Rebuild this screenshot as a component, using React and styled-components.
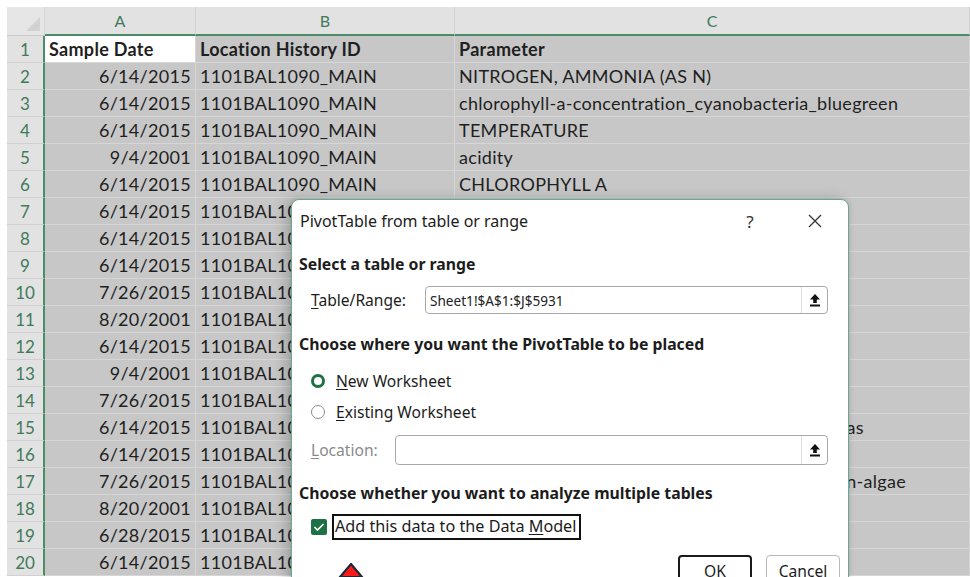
import React from "react";
import styled, { createGlobalStyle } from "styled-components";

const GlobalStyle = createGlobalStyle`
  html, body {
    margin: 0;
    padding: 0;
    background: #fff;
    overflow: hidden;
  }
  #root {
    width: 970px;
    height: 577px;
    position: relative;
    overflow: hidden;
  }
`;

const rows = [
  ["6/14/2015", "1101BAL1090_MAIN", "NITROGEN, AMMONIA (AS N)"],
  ["6/14/2015", "1101BAL1090_MAIN", "chlorophyll-a-concentration_cyanobacteria_bluegreen"],
  ["6/14/2015", "1101BAL1090_MAIN", "TEMPERATURE"],
  ["9/4/2001", "1101BAL1090_MAIN", "acidity"],
  ["6/14/2015", "1101BAL1090_MAIN", "CHLOROPHYLL A"],
  ["6/14/2015", "1101BAL1090_MAIN", ""],
  ["6/14/2015", "1101BAL1090_MAIN", ""],
  ["6/14/2015", "1101BAL1090_MAIN", ""],
  ["7/26/2015", "1101BAL1090_MAIN", ""],
  ["8/20/2001", "1101BAL1090_MAIN", ""],
  ["6/14/2015", "1101BAL1090_MAIN", ""],
  ["9/4/2001", "1101BAL1090_MAIN", ""],
  ["7/26/2015", "1101BAL1090_MAIN", ""],
  ["6/14/2015", "1101BAL1090_MAIN", "phycocyanin-concentration_cyanobacteria_bio_as"],
  ["6/14/2015", "1101BAL1090_MAIN", ""],
  ["7/26/2015", "1101BAL1090_MAIN", "chlorophyll-a-concentration_cryptophytes_green-algae"],
  ["8/20/2001", "1101BAL1090_MAIN", ""],
  ["6/28/2015", "1101BAL1090_MAIN", ""],
  ["6/14/2015", "1101BAL1090_MAIN", ""],
];

const Sheet = styled.div`
  position: absolute;
  left: 7px;
  top: 7px;
  right: 0;
  display: grid;
  grid-template-columns: 38px 151px 259px 1fr;
  grid-auto-rows: 27px;
  grid-template-rows: 29px;
  font-family: Lato, "Liberation Sans", sans-serif;
  font-size: 18px;
  letter-spacing: 0.3px;
  color: #1f1f1f;
`;

const Corner = styled.div`
  background: #e6e6e6;
  border-right: 1px solid #d4d4d4;
  border-bottom: 1px solid #c9c9c9;
  position: relative;
  &::after {
    content: "";
    position: absolute;
    right: 4px;
    bottom: 4px;
    border-left: 14px solid transparent;
    border-bottom: 14px solid #d2d2d2;
  }
`;

const ColHead = styled.div`
  background: #e2e2e2;
  border-right: 1px solid #d0d0d0;
  border-bottom: 2px solid #4a8c66;
  color: #3f7a5a;
  display: flex;
  align-items: center;
  justify-content: center;
  font-size: 16px;
  letter-spacing: 0;
`;

const RowHead = styled.div`
  background: #e2e2e2;
  border-right: 2px solid #4a8c66;
  border-bottom: 1px solid #d0d0d0;
  color: #3f7a5a;
  display: flex;
  align-items: center;
  justify-content: center;
  font-size: 17px;
  letter-spacing: 0;
`;

const Cell = styled.div`
  background: ${(p) => (p.$active ? "#ffffff" : "#c7c7c7")};
  border-right: 1px solid #d6d6d6;
  border-bottom: 1px solid #d6d6d6;
  display: flex;
  align-items: center;
  justify-content: ${(p) => (p.$right ? "flex-end" : "flex-start")};
  padding: 0 4px;
  font-weight: ${(p) => (p.$bold ? 700 : 400)};
  white-space: nowrap;
  overflow: hidden;
`;

const Dialog = styled.div`
  position: absolute;
  left: 291px;
  top: 199px;
  width: 558px;
  height: 420px;
  box-sizing: border-box;
  background: #fff;
  border: 1px solid #6aa88f;
  border-radius: 8px;
  box-shadow: -6px 0 14px rgba(0, 0, 0, 0.18), 0 0 4px rgba(0, 0, 0, 0.12);
  font-family: "Noto Sans", "Open Sans", sans-serif;
  color: #1c1c1c;
  display: flex;
  flex-direction: column;
`;

const TitleBar = styled.div`
  height: 42px;
  display: flex;
  align-items: center;
  padding-left: 8px;
  font-size: 16px;
`;

const Title = styled.div`
  flex: 1;
`;

const TitleButton = styled.div`
  width: ${(p) => p.$w}px;
  display: flex;
  justify-content: center;
  align-items: center;
  font-size: 17px;
  color: #333;
`;

const Heading = styled.div`
  height: ${(p) => p.$h}px;
  margin-top: ${(p) => p.$mt || 0}px;
  display: flex;
  align-items: center;
  padding-left: 7px;
  font-size: 15.8px;
  font-weight: 700;
`;

const FieldRow = styled.div`
  height: ${(p) => p.$h}px;
  margin-top: ${(p) => p.$mt || 0}px;
  display: flex;
  align-items: center;
  padding: 0 20px 0 19px;
  font-size: 15.6px;
`;

const FieldLabel = styled.div`
  width: ${(p) => p.$w}px;
  color: ${(p) => (p.$dim ? "#8a8a8a" : "#1c1c1c")};
  white-space: nowrap;
`;

const RangeBox = styled.div`
  flex: 1;
  height: 100%;
  box-sizing: border-box;
  border: 1px solid #a8a8a8;
  border-radius: 4px;
  display: flex;
  align-items: stretch;
`;

const RangeText = styled.div`
  flex: 1;
  display: flex;
  align-items: center;
  padding-left: 4px;
  font-size: 13.6px;
  color: #222;
`;

const PickButton = styled.div`
  width: 25px;
  border-left: 1px solid #e0e0e0;
  display: flex;
  align-items: center;
  justify-content: center;
`;

const Radio = styled.span`
  width: 14px;
  height: 14px;
  box-sizing: border-box;
  border-radius: 50%;
  border: ${(p) => (p.$on ? "3.5px solid #1e7145" : "1px solid #8c8c8c")};
  margin: 0 11px 0 0;
`;

const Check = styled.span`
  width: 16px;
  height: 16px;
  border-radius: 2px;
  background: #1e7145;
  display: flex;
  align-items: center;
  justify-content: center;
  margin-right: 5px;
`;

const FocusLabel = styled.span`
  border: 2px solid #111;
  padding: 0 3px 1px 1px;
  line-height: 21px;
  font-size: 16.2px;
`;

const Key = styled.span`
  text-decoration: underline;
  text-underline-offset: 2px;
`;

const Buttons = styled.div`
  margin-top: 15px;
  display: flex;
  justify-content: flex-end;
  gap: 14px;
  padding-right: 8px;
`;

const Button = styled.div`
  width: 74px;
  height: 30px;
  box-sizing: border-box;
  border: ${(p) => (p.$primary ? "2px solid #1a1a1a" : "1px solid #b9b9b9")};
  border-radius: 4px;
  display: flex;
  align-items: center;
  justify-content: center;
  font-size: 15.6px;
  padding-top: 2px;
`;

const Marker = styled.svg`
  position: absolute;
  left: 338px;
  top: 563px;
`;

const UpArrow = () => (
  <svg width="12" height="14" viewBox="0 0 12 14">
    <path d="M6 1 L11 6.5 H7.8 V10 H4.2 V6.5 H1 Z" fill="#111" />
    <rect x="1" y="11.5" width="10" height="2" fill="#111" />
  </svg>
);

export default function App() {
  return (
    <>
      <GlobalStyle />
      <Sheet>
        <Corner />
        <ColHead>A</ColHead>
        <ColHead>B</ColHead>
        <ColHead>C</ColHead>
        <RowHead>1</RowHead>
        <Cell $bold $active>Sample Date</Cell>
        <Cell $bold>Location History ID</Cell>
        <Cell $bold>Parameter</Cell>
        {rows.map((r, i) => (
          <React.Fragment key={i}>
            <RowHead>{i + 2}</RowHead>
            <Cell $right>{r[0]}</Cell>
            <Cell>{r[1]}</Cell>
            <Cell>{r[2]}</Cell>
          </React.Fragment>
        ))}
      </Sheet>

      <Dialog>
        <TitleBar>
          <Title>PivotTable from table or range</Title>
          <TitleButton $w={64}>?</TitleButton>
          <TitleButton $w={66}>
            <svg width="14" height="14" viewBox="0 0 14 14">
              <path d="M1 1 L13 13 M13 1 L1 13" stroke="#333" strokeWidth="1.3" />
            </svg>
          </TitleButton>
        </TitleBar>

        <Heading $h={44}>Select a table or range</Heading>
        <FieldRow $h={28}>
          <FieldLabel $w={114}>
            <Key>T</Key>able/Range:
          </FieldLabel>
          <RangeBox>
            <RangeText>Sheet1!$A$1:$J$5931</RangeText>
            <PickButton>
              <UpArrow />
            </PickButton>
          </RangeBox>
        </FieldRow>

        <Heading $h={40} $mt={10}>
          Choose where you want the PivotTable to be placed
        </Heading>
        <FieldRow $h={30} $mt={2}>
          <Radio $on />
          <span>
            <Key>N</Key>ew Worksheet
          </span>
        </FieldRow>
        <FieldRow $h={30} $mt={1}>
          <Radio />
          <span>
            <Key>E</Key>xisting Worksheet
          </span>
        </FieldRow>
        <FieldRow $h={30} $mt={8}>
          <FieldLabel $w={84} $dim>
            <Key>L</Key>ocation:
          </FieldLabel>
          <RangeBox>
            <RangeText />
            <PickButton>
              <UpArrow />
            </PickButton>
          </RangeBox>
        </FieldRow>

        <Heading $h={40} $mt={8}>
          Choose whether you want to analyze multiple tables
        </Heading>
        <FieldRow $h={26} $mt={1}>
          <Check>
            <svg width="12" height="10" viewBox="0 0 12 10">
              <path d="M1.5 5 L4.5 8 L10.5 2" stroke="#fff" strokeWidth="1.6" fill="none" />
            </svg>
          </Check>
          <FocusLabel>
            Add this data to the Data <Key>M</Key>odel
          </FocusLabel>
        </FieldRow>

        <Buttons>
          <Button $primary>OK</Button>
          <Button>Cancel</Button>
        </Buttons>
      </Dialog>

      <Marker width="26" height="16" viewBox="0 0 26 16">
        <path d="M13 1 L24 14 L2 14 Z" fill="#ff1a1a" stroke="#1b2a35" strokeWidth="2.2" />
      </Marker>
    </>
  );
}
